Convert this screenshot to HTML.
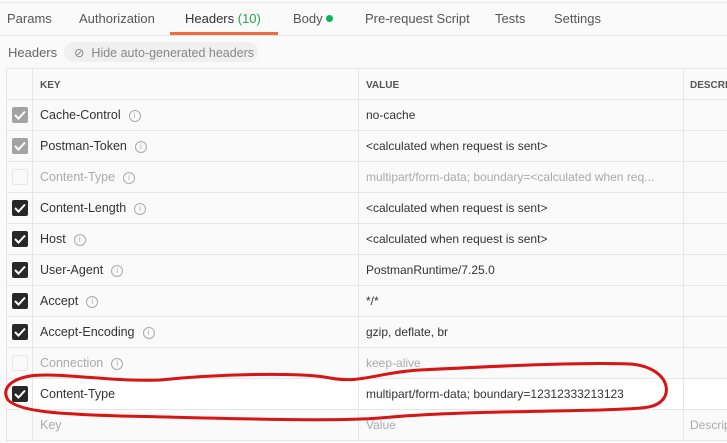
<!DOCTYPE html><html><head><style>
body{margin:0;width:727px;height:443px;background:#fafafa;font-family:"Liberation Sans",sans-serif;position:relative;overflow:hidden;color:#333}
.a{position:absolute;white-space:nowrap}
.tab{position:absolute;top:11px;font-size:13px;color:#555}
.row{position:absolute;left:6px;width:721px;height:31px;border-bottom:1px solid #e6e6e6;box-sizing:border-box;background:#fafafa}
.k{position:absolute;left:34px;top:8px;font-size:12.5px;color:#333}
.v{position:absolute;left:360px;top:8px;font-size:12px;color:#333}
.dis .k,.dis .v{color:#aaa}
.cb{position:absolute;left:6px;top:7px;width:16px;height:16px;border-radius:2px;box-sizing:border-box}
.on{background:#282828}.gr{background:#a3a3a3}.off{border:1px solid #e6e6e6;background:#fafafa}
.cb svg{position:absolute;left:2px;top:3px}
.i{display:inline-block;width:10px;height:10px;border:1px solid #aaa;border-radius:50%;font-size:8px;line-height:10px;text-align:center;color:#aaa;margin-left:8px;vertical-align:1px}
.vl{position:absolute;top:69px;width:1px;height:372px;background:#e6e6e6}
</style></head><body>
<div class="a" style="left:0;top:2px;width:727px;height:1px;background:#e8e8e8"></div>
<div class="a" style="left:0;top:35px;width:727px;height:1px;background:#e8e8e8"></div>
<div class="tab" style="left:7px">Params</div>
<div class="tab" style="left:79px">Authorization</div>
<div class="tab" style="left:185px;color:#333">Headers <span style="color:#26a05a">(10)</span></div>
<div class="a" style="left:170px;top:32px;width:108px;height:3px;background:#f26b3a"></div>
<div class="tab" style="left:293px">Body <span style="display:inline-block;width:7px;height:7px;border-radius:50%;background:#0cb35b;vertical-align:1px"></span></div>
<div class="tab" style="left:365px">Pre-request Script</div>
<div class="tab" style="left:495px">Tests</div>
<div class="tab" style="left:554px">Settings</div>
<div class="a" style="left:8px;top:45px;font-size:13px;color:#666">Headers</div>
<div class="a" style="left:64px;top:42px;width:194px;height:20px;border-radius:10px;background:#f0f0f0"></div>
<div class="a" style="left:74px;top:45px;font-size:12.5px;color:#888">⊘&nbsp; Hide auto-generated headers</div>
<div class="a" style="left:6px;top:68px;width:721px;height:1px;background:#e6e6e6"></div>
<div class="row" style="top:69px"><div class="k" style="font-size:10px;font-weight:bold;top:11px;color:#555">KEY</div><div class="v" style="font-size:10px;font-weight:bold;top:11px;color:#555">VALUE</div><div class="v" style="left:684px;font-size:10px;font-weight:bold;top:11px;color:#555">DESCRIPTION</div></div>

<div class="row" style="top:100px"><div class="cb gr"><svg width="12" height="10"><path d="M1 5l3.5 3.5L11 1.5" stroke="#fff" stroke-width="2" fill="none"/></svg></div><div class="k">Cache-Control<span class="i">i</span></div><div class="v">no-cache</div></div>
<div class="row" style="top:131px"><div class="cb gr"><svg width="12" height="10"><path d="M1 5l3.5 3.5L11 1.5" stroke="#fff" stroke-width="2" fill="none"/></svg></div><div class="k">Postman-Token<span class="i">i</span></div><div class="v">&lt;calculated when request is sent&gt;</div></div>
<div class="row dis" style="top:162px"><div class="cb off"></div><div class="k">Content-Type<span class="i">i</span></div><div class="v">multipart/form-data; boundary=&lt;calculated when req...</div></div>
<div class="row" style="top:193px"><div class="cb on"><svg width="12" height="10"><path d="M1 5l3.5 3.5L11 1.5" stroke="#fff" stroke-width="2" fill="none"/></svg></div><div class="k">Content-Length<span class="i">i</span></div><div class="v">&lt;calculated when request is sent&gt;</div></div>
<div class="row" style="top:224px"><div class="cb on"><svg width="12" height="10"><path d="M1 5l3.5 3.5L11 1.5" stroke="#fff" stroke-width="2" fill="none"/></svg></div><div class="k">Host<span class="i">i</span></div><div class="v">&lt;calculated when request is sent&gt;</div></div>
<div class="row" style="top:255px"><div class="cb on"><svg width="12" height="10"><path d="M1 5l3.5 3.5L11 1.5" stroke="#fff" stroke-width="2" fill="none"/></svg></div><div class="k">User-Agent<span class="i">i</span></div><div class="v">PostmanRuntime/7.25.0</div></div>
<div class="row" style="top:286px"><div class="cb on"><svg width="12" height="10"><path d="M1 5l3.5 3.5L11 1.5" stroke="#fff" stroke-width="2" fill="none"/></svg></div><div class="k">Accept<span class="i">i</span></div><div class="v">*/*</div></div>
<div class="row" style="top:317px"><div class="cb on"><svg width="12" height="10"><path d="M1 5l3.5 3.5L11 1.5" stroke="#fff" stroke-width="2" fill="none"/></svg></div><div class="k">Accept-Encoding<span class="i">i</span></div><div class="v">gzip, deflate, br</div></div>
<div class="row dis" style="top:348px"><div class="cb off"></div><div class="k">Connection<span class="i">i</span></div><div class="v">keep-alive</div></div>
<div class="row" style="top:379px;background:#fff"><div class="cb on"><svg width="12" height="10"><path d="M1 5l3.5 3.5L11 1.5" stroke="#fff" stroke-width="2" fill="none"/></svg></div><div class="k">Content-Type</div><div class="v">multipart/form-data; boundary=12312333213123</div></div>
<div class="row dis" style="top:410px"><div class="k">Key</div><div class="v">Value</div><div class="v" style="left:684px">Description</div></div>
<div class="vl" style="left:6px"></div><div class="vl" style="left:32px"></div><div class="vl" style="left:358px"></div><div class="vl" style="left:683px"></div>
<svg class="a" style="left:0;top:0" width="727" height="443"><path d="M160 380 C220 374 300 372 330 378 C360 384 380 372 420 370 C500 366 580 362 630 364 C660 366 672 385 664 398 C656 410 640 408 600 410 C520 412 440 412 380 418 C330 422 220 418 120 416 C60 414 20 412 8 400 C2 390 8 380 30 376 C60 372 110 382 160 380 Z" stroke="#d81515" stroke-width="3" fill="none" stroke-linejoin="round"/></svg>
</body></html>
